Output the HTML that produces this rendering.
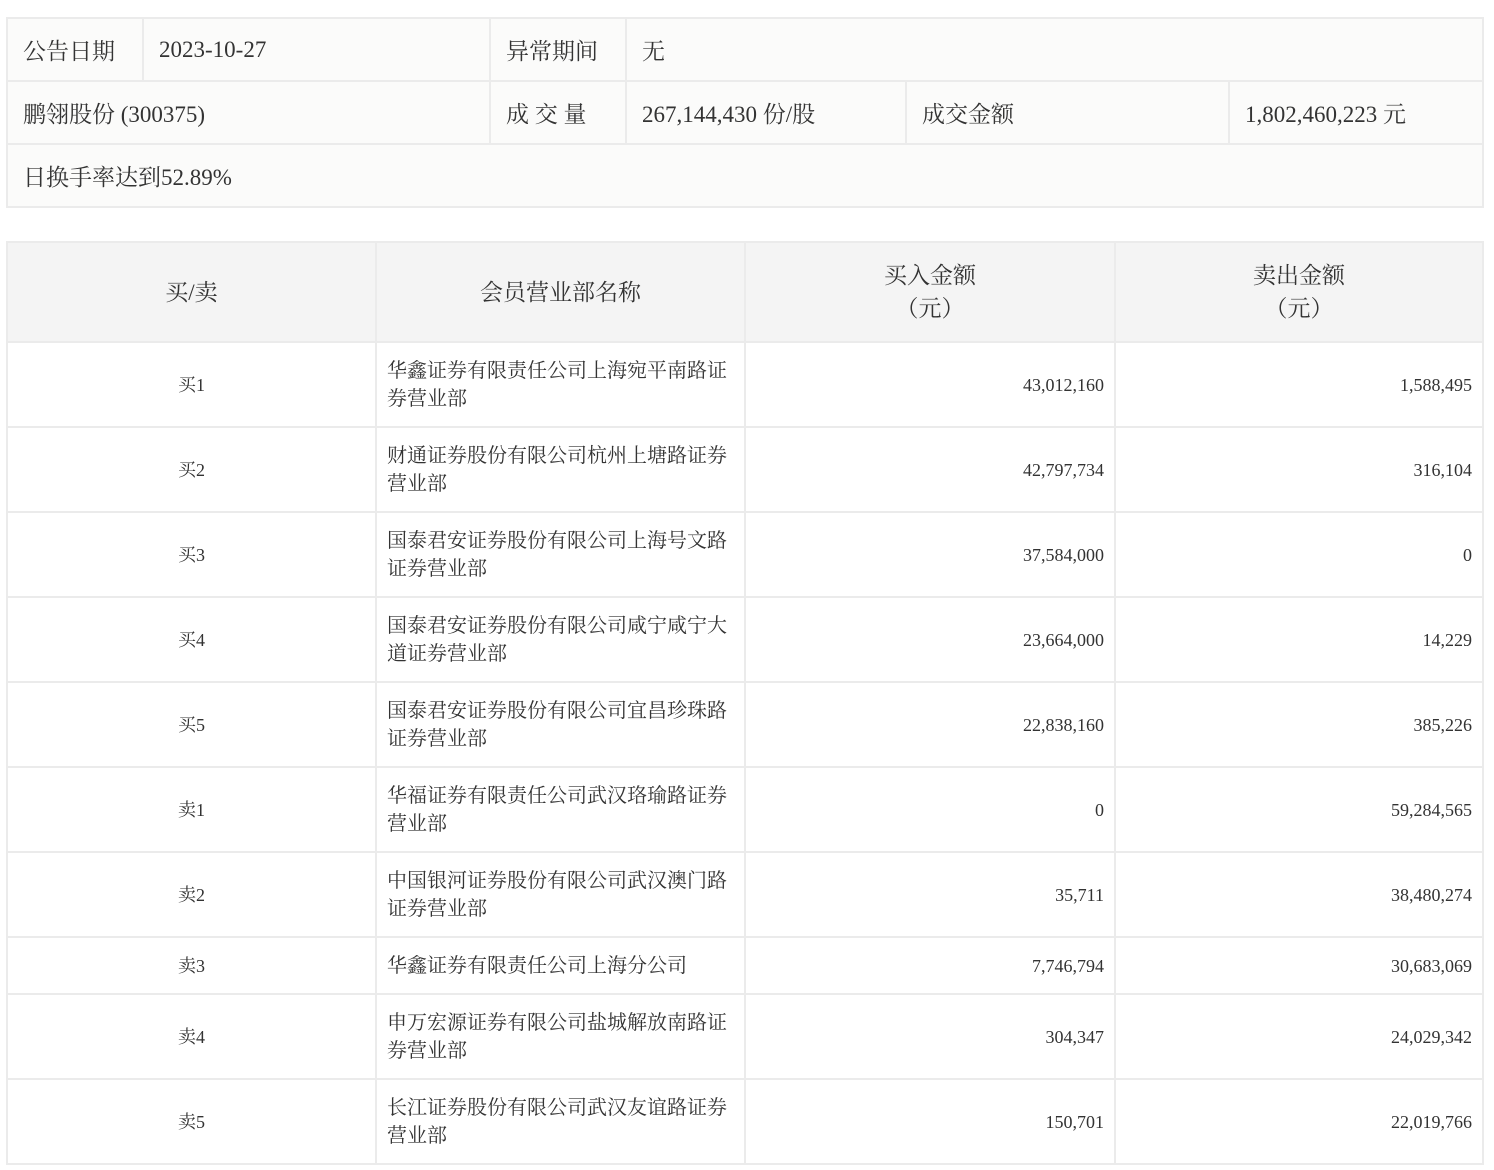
<!DOCTYPE html>
<html><head><meta charset="utf-8"><style>
body{margin:0;background:#fff;font-family:"Liberation Serif","Noto Serif CJK SC",serif;color:#333;}
table{border-collapse:collapse;position:absolute;table-layout:fixed;}
td{border:2px solid #ebebeb;padding:0;}
#t1{left:6px;top:17px;width:1478px;background:#fbfbfa;font-size:23px;}
#t1 td{height:61px;padding-left:15px;}
#t2{left:6px;top:241px;width:1478px;font-size:18px;}
#t2 th{background:#f4f4f4;border:2px solid #ebebeb;font-weight:normal;font-size:23px;height:96px;line-height:33px;}
#t2 td{height:83px;line-height:28px;}
#t2 td.c{text-align:center;}
#t2 td.n{padding:0 10px;font-size:20px;}
#t2 td.r{text-align:right;padding-right:10px;}
#t2 tr.s td{height:55px;}
</style></head><body>
<table id="t1">
<colgroup><col style="width:136px"><col style="width:347px"><col style="width:136px"><col style="width:280px"><col style="width:323px"><col></colgroup>
<tr><td>公告日期</td><td>2023-10-27</td><td>异常期间</td><td colspan="3">无</td></tr>
<tr><td colspan="2">鹏翎股份 (300375)</td><td>成 交 量</td><td>267,144,430 份/股</td><td>成交金额</td><td>1,802,460,223 元</td></tr>
<tr><td colspan="6">日换手率达到52.89%</td></tr>
</table>
<table id="t2">
<colgroup><col style="width:369px"><col style="width:369px"><col style="width:370px"><col></colgroup>
<tr><th>买/卖</th><th>会员营业部名称</th><th>买入金额<br>（元）</th><th>卖出金额<br>（元）</th></tr>
<tr><td class="c">买1</td><td class="n">华鑫证券有限责任公司上海宛平南路证券营业部</td><td class="r">43,012,160</td><td class="r">1,588,495</td></tr>
<tr><td class="c">买2</td><td class="n">财通证券股份有限公司杭州上塘路证券营业部</td><td class="r">42,797,734</td><td class="r">316,104</td></tr>
<tr><td class="c">买3</td><td class="n">国泰君安证券股份有限公司上海号文路证券营业部</td><td class="r">37,584,000</td><td class="r">0</td></tr>
<tr><td class="c">买4</td><td class="n">国泰君安证券股份有限公司咸宁咸宁大道证券营业部</td><td class="r">23,664,000</td><td class="r">14,229</td></tr>
<tr><td class="c">买5</td><td class="n">国泰君安证券股份有限公司宜昌珍珠路证券营业部</td><td class="r">22,838,160</td><td class="r">385,226</td></tr>
<tr><td class="c">卖1</td><td class="n">华福证券有限责任公司武汉珞瑜路证券营业部</td><td class="r">0</td><td class="r">59,284,565</td></tr>
<tr><td class="c">卖2</td><td class="n">中国银河证券股份有限公司武汉澳门路证券营业部</td><td class="r">35,711</td><td class="r">38,480,274</td></tr>
<tr class="s"><td class="c">卖3</td><td class="n">华鑫证券有限责任公司上海分公司</td><td class="r">7,746,794</td><td class="r">30,683,069</td></tr>
<tr><td class="c">卖4</td><td class="n">申万宏源证券有限公司盐城解放南路证券营业部</td><td class="r">304,347</td><td class="r">24,029,342</td></tr>
<tr><td class="c">卖5</td><td class="n">长江证券股份有限公司武汉友谊路证券营业部</td><td class="r">150,701</td><td class="r">22,019,766</td></tr>
</table>
</body></html>
